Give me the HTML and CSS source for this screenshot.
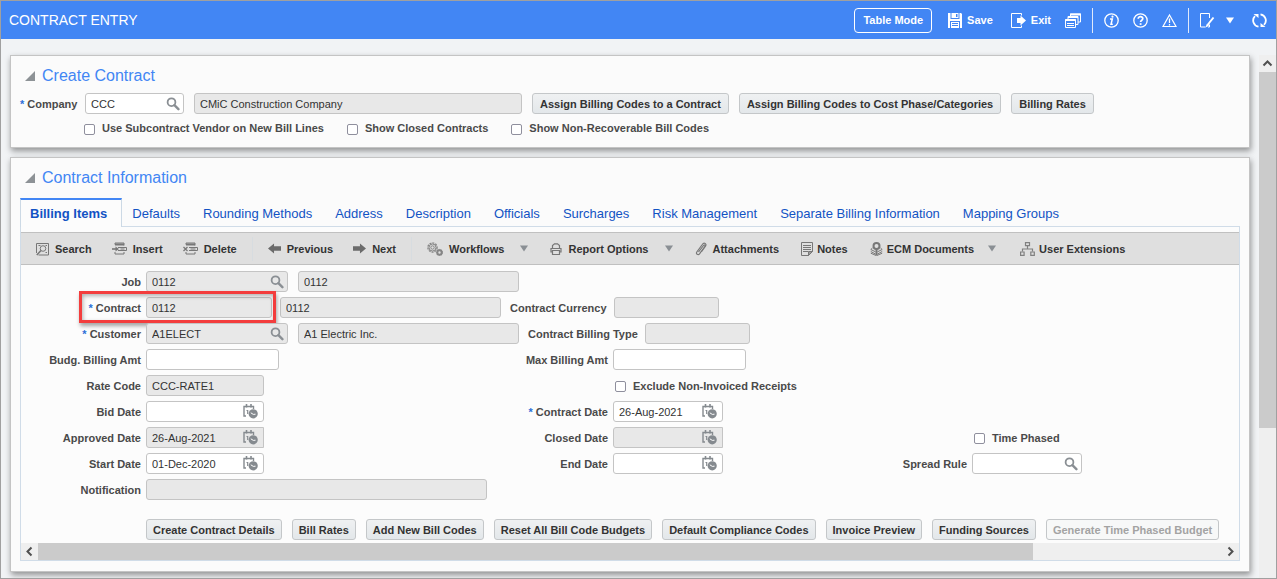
FILE: index.html
```html
<!DOCTYPE html>
<html lang="en">
<head>
  <meta charset="UTF-8">
  <title>Contract Entry</title>
  <link rel="stylesheet" href="styles.css">
</head>
<body>
  <svg class="sprite" aria-hidden="true">
    <symbol id="lens" viewBox="0 0 14 14">
      <circle cx="5.5" cy="5.2" r="3.9" fill="none" stroke="#8a8f94" stroke-width="1.8"/>
      <path d="M8.4 8.2l4 4" stroke="#8a8f94" stroke-width="2.4" stroke-linecap="round"/>
    </symbol>
    <symbol id="calendar" viewBox="0 0 15 15">
      <path d="M3 12H1V2.500h9.500V5" fill="none" stroke="#858a8f" stroke-width="1.4"/>
      <path d="M3.500 0v3.500M8 0v3.500" stroke="#858a8f" stroke-width="1.600"/>
      <path d="M3.500 6.500h1.200V10" fill="none" stroke="#858a8f" stroke-width="1.2"/>
      <circle cx="10.200" cy="9.800" r="4.600" fill="#858a8f"/>
      <path d="M7.800 8.800l2.500 1.600 2.200-.2" fill="none" stroke="#fff" stroke-width="1"/>
    </symbol>
    <symbol id="left" viewBox="0 0 17 17"><path d="M10.500 4.500L6.500 8.500l4 4" fill="none" stroke="#505050" stroke-width="2"/></symbol>
    <symbol id="right" viewBox="0 0 17 17"><path d="M6.500 4.500l4 4-4 4" fill="none" stroke="#505050" stroke-width="2"/></symbol>
    <symbol id="up" viewBox="0 0 17 17"><path d="M4.500 10.500l4-4 4 4" fill="none" stroke="#505050" stroke-width="2"/></symbol>
    <symbol id="fold" viewBox="0 0 10 10"><path d="M10 0v10H0z" fill="#8d9296"/></symbol>
    <symbol id="caret" viewBox="0 0 8 7"><path d="M0 0.500h8L4 6.500z" fill="currentColor"/></symbol>
  </svg>

  <header class="topbar">
    <h1>CONTRACT ENTRY</h1>
    <nav class="top-actions">
      <button class="mode">Table Mode</button>
      <button class="top-btn save">
        <svg width="14" height="15" viewBox="0 0 14 15"><path d="M0 0h13l1 1v14H0z" fill="#fff"/><path d="M2.500 0h9v6h-9z" fill="#4286f4"/><path d="M3.500 0h7v5h-7z" fill="#fff"/><path d="M8 1h1.500v3H8zM2 8h10v7H2z" fill="#4286f4"/><path d="M3 9h8v6H3z" fill="#fff"/><path d="M4 10.500h6M4 12.500h6" stroke="#4286f4"/></svg>
        Save
      </button>
      <button class="top-btn exit">
        <svg width="15" height="15" viewBox="0 0 15 15"><path d="M10.500 2.500v-2H.5v14h10v-2" fill="none" stroke="#fff"/><path d="M6 5h3.500V2.500L15 7.500l-5.500 5V10H6z" fill="#fff"/></svg>
        Exit
      </button>
      <button class="top-btn" aria-label="Windows">
        <svg width="16" height="15" viewBox="0 0 16 15" fill="#4286f4" stroke="#fff"><path d="M5.500 1h10v8h-10z"/><path d="M5 1.500h11" stroke-width="2"/><path d="M3 3.500h10v8H3z"/><path d="M3 4h10" stroke-width="2"/><path d="M.5 6.500h10v8H.5z"/><path d="M.5 7h10" stroke-width="2"/><path d="M2 10.500h7M2 12.500h7"/></svg>
      </button>
      <span class="divider"></span>
      <button class="top-btn" aria-label="Information">
        <svg width="15" height="15" viewBox="0 0 15 15"><circle cx="7.500" cy="7.500" r="6.700" fill="none" stroke="#fff" stroke-width="1.300"/><path d="M6 6h2.300L7 11.300h1.800" fill="none" stroke="#fff" stroke-width="1.500"/><circle cx="8.500" cy="3.700" r="1.100" fill="#fff"/></svg>
      </button>
      <button class="top-btn" aria-label="Help">
        <svg width="15" height="15" viewBox="0 0 15 15"><circle cx="7.500" cy="7.500" r="6.700" fill="none" stroke="#fff" stroke-width="1.300"/><path d="M5.200 5.800c0-3 4.800-2.700 4.600 0-.1 1.400-2.200 1.500-2.200 3.200" fill="none" stroke="#fff" stroke-width="1.700"/><path d="M6.700 10.200h1.800v1.700H6.700z" fill="#fff"/></svg>
      </button>
      <button class="top-btn" aria-label="Warnings">
        <svg width="15" height="15" viewBox="0 0 15 15"><path d="M7.500 2L14 13.500H1z" fill="none" stroke="#fff" stroke-width="1.200"/><path d="M7.500 5.500v4.500M7.500 11v1.500" stroke="#fff" stroke-width="1.300"/></svg>
      </button>
      <span class="divider"></span>
      <button class="top-btn" aria-label="Edit page">
        <svg width="15" height="15" viewBox="0 0 15 15"><path d="M9.500 5V.5H.5v13.500h5M9.500 11.500V14H8" fill="none" stroke="#fff"/><path d="M13.500 4.500L7.500 12" stroke="#fff" stroke-width="2"/><path d="M6.800 11L5.500 14.500l3.500-1.800z" fill="#fff"/></svg>
      </button>
      <button class="top-btn more" aria-label="More"><svg width="8" height="7"><use href="#caret"/></svg></button>
      <button class="top-btn refresh" aria-label="Refresh">
        <svg width="15" height="15" viewBox="0 0 15 15"><path d="M6.500 13.700A6.200 6.200 0 0 1 3 3.200M8.500 1.300A6.200 6.200 0 0 1 12 11.800" fill="none" stroke="#fff" stroke-width="1.800"/><path d="M1.500 1h5v4zM13.500 14h-5v-4z" fill="#fff"/></svg>
      </button>
    </nav>
  </header>

  <div class="page">
    <main>
      <section class="card create">
        <h2><svg width="10" height="10"><use href="#fold"/></svg>Create Contract</h2>
        <div class="line">
          <label for="company"><i>*</i> Company</label>
          <span class="field company"><input id="company" value="CCC"><svg width="14" height="14"><use href="#lens"/></svg></span>
          <span class="field company-name off"><input value="CMiC Construction Company" aria-label="Company name" readonly></span>
          <button class="btn">Assign Billing Codes to a Contract</button>
          <button class="btn">Assign Billing Codes to Cost Phase/Categories</button>
          <button class="btn">Billing Rates</button>
        </div>
        <div class="checks">
          <label><input type="checkbox">Use Subcontract Vendor on New Bill Lines</label>
          <label><input type="checkbox">Show Closed Contracts</label>
          <label><input type="checkbox">Show Non-Recoverable Bill Codes</label>
        </div>
      </section>

      <section class="card info">
        <h2><svg width="10" height="10"><use href="#fold"/></svg>Contract Information</h2>
        <nav class="tabs">
          <a class="active" href="#">Billing Items</a>
          <a href="#">Defaults</a>
          <a href="#">Rounding Methods</a>
          <a href="#">Address</a>
          <a href="#">Description</a>
          <a href="#">Officials</a>
          <a href="#">Surcharges</a>
          <a href="#">Risk Management</a>
          <a href="#">Separate Billing Information</a>
          <a href="#">Mapping Groups</a>
        </nav>
        <div class="panel">
          <div class="toolbar">
            <button><svg width="13" height="14" viewBox="0 0 13 14" fill="none" stroke="#777"><path d="M2.500 13H12.500V1.500H.5V11"/><circle cx="7" cy="6.500" r="2.800"/><path d="M5 8.500L.8 13" stroke-width="1.600"/><path d="M2.500 3.500h2M9.500 3.500h1.500M9.500 10.500h1.500"/></svg>Search</button>
            <button><svg width="15" height="13" viewBox="0 0 15 13" fill="none" stroke="#777"><path d="M3 2.500V1h9v2.500M6 5.500h8.500v3H6M3 10v2h9v-2"/><path d="M3 2.500h9" stroke-width="2"/><path d="M0 7h5" stroke-width="1.600"/><path d="M3.500 4.500L7 7 3.500 9.500z" fill="#777" stroke="none"/><path d="M8.500 7h4"/></svg>Insert</button>
            <button><svg width="15" height="13" viewBox="0 0 15 13" fill="none" stroke="#777"><path d="M3 2.500V1h9v2.500M6 5.500h8.500v3H6M3 10v2h9v-2"/><path d="M3 2.500h9" stroke-width="2"/><path d="M.5 5l4 4M4.500 5l-4 4" stroke-width="1.300"/><path d="M7.500 7h5"/></svg>Delete</button>
            <span class="sep"></span>
            <button><svg width="13" height="11" viewBox="0 0 14 11"><path d="M0 5.500L6.500 0v3H14v5H6.500v3z" fill="#6b6b6b"/></svg>Previous</button>
            <button><svg width="13" height="11" viewBox="0 0 14 11"><path d="M14 5.500L7.500 0v3H0v5h7.500v3z" fill="#6b6b6b"/></svg>Next</button>
            <span class="sep"></span>
            <button><svg width="16" height="14" viewBox="0 0 16 14" fill="none" stroke="#858585"><circle cx="5.500" cy="5.500" r="4.600" stroke-width="1.300" stroke-dasharray="2 1"/><circle cx="5.500" cy="5.500" r="3.500"/><circle cx="5.500" cy="5.500" r="1.700"/><circle cx="12.500" cy="10.500" r="2.200" stroke-width="2"/><circle cx="12.500" cy="10.500" r="3.100" stroke-dasharray="1.200 1"/></svg>Workflows<svg class="caret" width="8" height="7"><use href="#caret"/></svg></button>
            <button><svg width="12" height="12" viewBox="0 0 12 12" fill="none" stroke="#777" stroke-width="1.200"><path d="M2.500 5V2.500l2-1.700h3l2 1.700V5M2.500 9H1V5.500h10V9H9.500M2.500 7.500h7v4h-7z"/></svg>Report Options<svg class="caret" width="8" height="7"><use href="#caret"/></svg></button>
            <button><svg width="12" height="14" viewBox="0 0 12 14"><path d="M3.500 10l5-6.500c1-1.300 2 0 1.300 1L4.500 11.800c-1.300 1.700-4 .2-2.700-1.800l5.500-7.500C9-.2 12.200 1.700 10.500 4.200l-4 5.500" fill="none" stroke="#777" stroke-width="1.200"/></svg>Attachments</button>
            <button class="tight"><svg width="12" height="14" viewBox="0 0 12 14" fill="none" stroke="#777"><path d="M.5.5h11v9l-4 4h-7z"/><path d="M2 3.500h8M2 5.500h8M2 7.500h8M2 9.500h5"/><path d="M7.500 13.500v-4h4z" fill="#999"/></svg>Notes</button>
            <button class="tight"><svg width="13" height="14" viewBox="0 0 13 14" fill="none" stroke="#777"><circle cx="6.500" cy="4" r="3" stroke-width="2"/><path d="M6.500 7v6" stroke-width="2"/><path d="M2.500 6L.8 7.500l4.700 2.300M10.500 6l1.700 1.500-4.700 2.300M.8 9.500l4.700 2.500M12.200 9.500L7.500 12M.8 11.200l5.700 2.500 5.700-2.500"/></svg>ECM Documents<svg class="caret" width="8" height="7"><use href="#caret"/></svg></button>
            <button class="tight"><svg width="15" height="14" viewBox="0 0 15 14" fill="none" stroke="#808080" stroke-width="1.200"><path d="M5.500.6h4v3h-4zM7.500 4v3M2.500 9.500V7h10v2.500"/><path d="M.6 10h3.500v3.400H.6zM10.800 10h3.500v3.400h-3.500z"/></svg>User Extensions</button>
          </div>

          <form>
            <div class="line">
              <label for="job">Job</label>
              <span class="field lov off"><input id="job" value="0112" readonly><svg width="14" height="14"><use href="#lens"/></svg></span>
              <span class="field desc off"><input value="0112" aria-label="Job name" readonly></span>
            </div>
            <div class="line">
              <label for="contract"><i>*</i> Contract</label>
              <span class="field contract off"><input id="contract" value="0112" readonly></span>
              <span class="field desc off"><input value="0112" aria-label="Contract name" readonly></span>
              <label class="inner" for="currency">Contract Currency</label>
              <span class="field short off"><input id="currency" readonly></span>
              <span class="highlight"></span>
            </div>
            <div class="line">
              <label for="customer"><i>*</i> Customer</label>
              <span class="field lov off"><input id="customer" value="A1ELECT" readonly><svg width="14" height="14"><use href="#lens"/></svg></span>
              <span class="field desc off"><input value="A1 Electric Inc." aria-label="Customer name" readonly></span>
              <label class="inner" for="billtype">Contract Billing Type</label>
              <span class="field short off"><input id="billtype" readonly></span>
            </div>
            <div class="grid">
              <label for="budg">Budg. Billing Amt</label>
              <span class="field amount"><input id="budg"></span>
              <label for="max">Max Billing Amt</label>
              <span class="field amount"><input id="max"></span>

              <label class="first" for="rate">Rate Code</label>
              <span class="field date off"><input id="rate" value="CCC-RATE1" readonly></span>
              <label class="tick mid"><input type="checkbox">Exclude Non-Invoiced Receipts</label>

              <label class="first" for="bid">Bid Date</label>
              <span class="field date"><input id="bid"><svg class="cal" width="15" height="15"><use href="#calendar"/></svg></span>
              <label for="cdate"><i>*</i> Contract Date</label>
              <span class="field date2"><input id="cdate" value="26-Aug-2021"><svg class="cal" width="15" height="15"><use href="#calendar"/></svg></span>

              <label class="first" for="approved">Approved Date</label>
              <span class="field date off square"><input id="approved" value="26-Aug-2021" readonly><svg class="cal" width="15" height="15"><use href="#calendar"/></svg></span>
              <label for="closed">Closed Date</label>
              <span class="field date2 off square"><input id="closed" readonly><svg class="cal" width="15" height="15"><use href="#calendar"/></svg></span>
              <label class="tick last"><input type="checkbox">Time Phased</label>

              <label class="first" for="start">Start Date</label>
              <span class="field date"><input id="start" value="01-Dec-2020"><svg class="cal" width="15" height="15"><use href="#calendar"/></svg></span>
              <label for="end">End Date</label>
              <span class="field date2"><input id="end"><svg class="cal" width="15" height="15"><use href="#calendar"/></svg></span>
              <label for="spread">Spread Rule</label>
              <span class="field date2"><input id="spread"><svg width="14" height="14"><use href="#lens"/></svg></span>

              <label class="first" for="notification">Notification</label>
              <span class="field off"><input id="notification" readonly></span>
            </div>
            <div class="buttons">
              <button type="button" class="btn">Create Contract Details</button>
              <button type="button" class="btn">Bill Rates</button>
              <button type="button" class="btn">Add New Bill Codes</button>
              <button type="button" class="btn">Reset All Bill Code Budgets</button>
              <button type="button" class="btn">Default Compliance Codes</button>
              <button type="button" class="btn">Invoice Preview</button>
              <button type="button" class="btn">Funding Sources</button>
              <button type="button" class="btn" disabled>Generate Time Phased Budget</button>
            </div>
          </form>

          <div class="hscroll">
            <svg width="17" height="17"><use href="#left"/></svg>
            <div class="track"><div class="thumb"></div></div>
            <svg width="17" height="17"><use href="#right"/></svg>
          </div>
        </div>
      </section>
    </main>
    <div class="vscroll">
      <svg width="17" height="17"><use href="#up"/></svg>
      <div class="thumb"></div>
    </div>
  </div>
</body>
</html>
```

FILE: styles.css
```css
* {
  box-sizing: border-box;
}
body {
  margin: 0;
  min-height: 100vh;
  display: flex;
  flex-direction: column;
  border: 1px solid #a0a0a0;
  background: #f1f3f5;
  color: #4a4a4a;
  font-family: "Liberation Sans", Arial, sans-serif;
  font-size: 11px;
}
button, input {
  font: inherit;
  color: inherit;
}
button {
  margin: 0;
  cursor: pointer;
  white-space: nowrap;
}
svg {
  flex: none;
}
.sprite {
  position: absolute;
  width: 0;
  height: 0;
}

/* top bar */
.topbar {
  display: flex;
  align-items: center;
  justify-content: space-between;
  height: 38px;
  padding: 0 9px 0 8px;
  background: #4286f4;
  color: #fff;
}
h1 {
  margin: 0;
  font-size: 14px;
  font-weight: normal;
}
.top-actions {
  display: flex;
  align-items: center;
  gap: 14px;
  font-weight: bold;
}
.top-btn {
  display: flex;
  align-items: center;
  gap: 5px;
  padding: 0;
  border: 0;
  background: none;
}
.mode {
  height: 25px;
  padding: 0 8px;
  border: 1px solid #fff;
  border-radius: 4px;
  background: none;
}
.save {
  margin: 0 4px 0 2px;
}
.more {
  margin-left: -3px;
}
.refresh {
  margin-left: 4px;
}
.divider {
  width: 1px;
  height: 25px;
  margin: 0 -3px;
  background: #dfe9fb;
}

/* page */
.page {
  flex: 1;
  display: flex;
  padding-top: 16px;
}
main {
  flex: 1;
  min-width: 0;
  padding: 0 9px 6px;
}
.card {
  border: 1px solid #c4c4c4;
  background: #fbfbfb;
  box-shadow: 1px 3px 6px rgba(0, 0, 0, 0.4);
}
.create {
  margin-bottom: 9px;
  padding: 10px 9px 11px;
}
.info {
  padding: 10px 9px;
}
h2 {
  display: flex;
  align-items: center;
  gap: 7px;
  height: 20px;
  margin: 0 0 7px;
  padding-left: 5px;
  color: #4286f4;
  font-size: 16px;
  font-weight: normal;
}
.info h2 {
  margin-bottom: 10px;
}
label {
  font-weight: bold;
  white-space: nowrap;
}
label i {
  color: #2d6fd8;
  font-style: normal;
}

/* fields */
.field {
  display: flex;
  align-items: center;
  height: 21px;
  padding: 0 3px 0 5px;
  border: 1px solid #c4c4c4;
  border-radius: 3px;
  background: #fff;
  color: #333;
}
.field input {
  flex: 1;
  width: 0;
  min-width: 0;
  padding: 0;
  border: 0;
  outline: 0;
  background: none;
}
.off {
  background: #e8e8e8;
}
.square {
  border-radius: 3px 0 0 3px;
}
.cal {
  margin-right: 2px;
}
input[type="checkbox"] {
  appearance: none;
  width: 11px;
  height: 11px;
  margin: 2px 7px 0 0;
  border: 1px solid #8f8f9d;
  border-radius: 2px;
  background: #fff;
}
input[type="checkbox"]:checked {
  background: #4286f4;
}
.btn {
  height: 21px;
  padding: 0 6px;
  border: 1px solid #c4c7c9;
  border-radius: 3px;
  background: linear-gradient(#eff1f2, #e3e7ea);
  color: #333;
  font-weight: bold;
}
.btn:disabled {
  background: #f7f8f8;
  color: #a3a3a3;
}
.line {
  display: flex;
  align-items: center;
}
.create .line {
  gap: 10px;
}
.create .line label {
  width: 59px;
  margin-right: -4px;
}
.create .btn {
  padding: 0 7px;
}
.company {
  width: 99px;
}
.company-name {
  width: 328px;
}
.checks {
  display: flex;
  gap: 23px;
  margin-top: 6px;
  padding-left: 64px;
}
.checks label, .tick {
  display: flex;
  align-items: center;
  height: 16px;
}

/* tabs */
.tabs {
  display: flex;
  position: relative;
  z-index: 1;
  height: 29px;
  margin-bottom: -1px;
}
.tabs a {
  padding: 8px 0 0 23px;
  color: #1253c4;
  font-size: 13px;
  line-height: 15px;
  text-decoration: none;
  white-space: nowrap;
}
.tabs .active {
  margin-right: -13px;
  padding: 6px 14px 0 9px;
  border: 1px solid #ccd9e5;
  border-top: 2px solid #4286f4;
  border-bottom: 0;
  background: #fcfcfc;
  font-weight: bold;
}
.panel {
  padding-top: 5px;
  border: 1px solid #d0dce8;
  background: #fcfcfc;
}
.toolbar {
  display: flex;
  align-items: center;
  gap: 20px;
  height: 33px;
  padding-left: 15px;
  border-top: 1px solid #c0c0c0;
  border-bottom: 1px solid #c0c0c0;
  background: #dfdfdf;
  color: #333;
}
.toolbar button {
  display: flex;
  align-items: center;
  gap: 6px;
  padding: 0;
  border: 0;
  background: none;
  font-weight: bold;
}
.toolbar .tight {
  gap: 4px;
  margin-left: 2px;
}
.toolbar .caret {
  margin: 0 2px 0 10px;
  color: #8a8f94;
}
.sep {
  width: 1px;
  height: 24px;
  margin: 0 -5px;
  background: #d7dce0;
}

/* contract form */
form {
  padding: 6px 0 3px;
}
form .line {
  position: relative;
  margin-bottom: 5px;
}
form .line label {
  width: 120px;
  margin-right: 5px;
  text-align: right;
}
form .line .inner {
  width: auto;
  margin: 0 7px 0 9px;
}
.lov {
  width: 142px;
}
.contract {
  width: 126px;
}
.desc {
  width: 221px;
  margin-left: 10px;
}
.contract + .desc {
  margin-left: 8px;
}
.short {
  width: 105px;
}
.highlight {
  position: absolute;
  top: -6px;
  left: 58px;
  width: 197px;
  height: 32px;
  border: 3px solid #f33d3d;
  box-shadow: 1px 3px 4px rgba(0, 0, 0, 0.35), inset 1px 2px 4px rgba(0, 0, 0, 0.3);
  pointer-events: none;
}
.grid {
  display: grid;
  grid-template-columns: 120px 341px 116px 239px 110px 1fr;
  gap: 5px;
  align-items: center;
}
.grid label {
  text-align: right;
}
.grid .first {
  grid-column: 1;
}
.grid .mid {
  grid-column: 4 / 6;
  padding-left: 2px;
}
.grid .last {
  grid-column: 6;
  padding-left: 2px;
}
.amount {
  width: 133px;
}
.date {
  width: 118px;
}
.date2 {
  width: 110px;
}
.buttons {
  display: flex;
  gap: 10px;
  margin-top: 19px;
  padding-left: 125px;
}

/* scroll bars */
.hscroll {
  display: flex;
  height: 17px;
  background: #efefef;
}
.track {
  flex: 1;
}
.hscroll .thumb {
  width: 84%;
  height: 17px;
  background: #cbcbcb;
}
.vscroll {
  display: flex;
  flex-direction: column;
  width: 17px;
  background: #efefef;
}
.vscroll .thumb {
  height: 68%;
  background: #cbcbcb;
}
```
